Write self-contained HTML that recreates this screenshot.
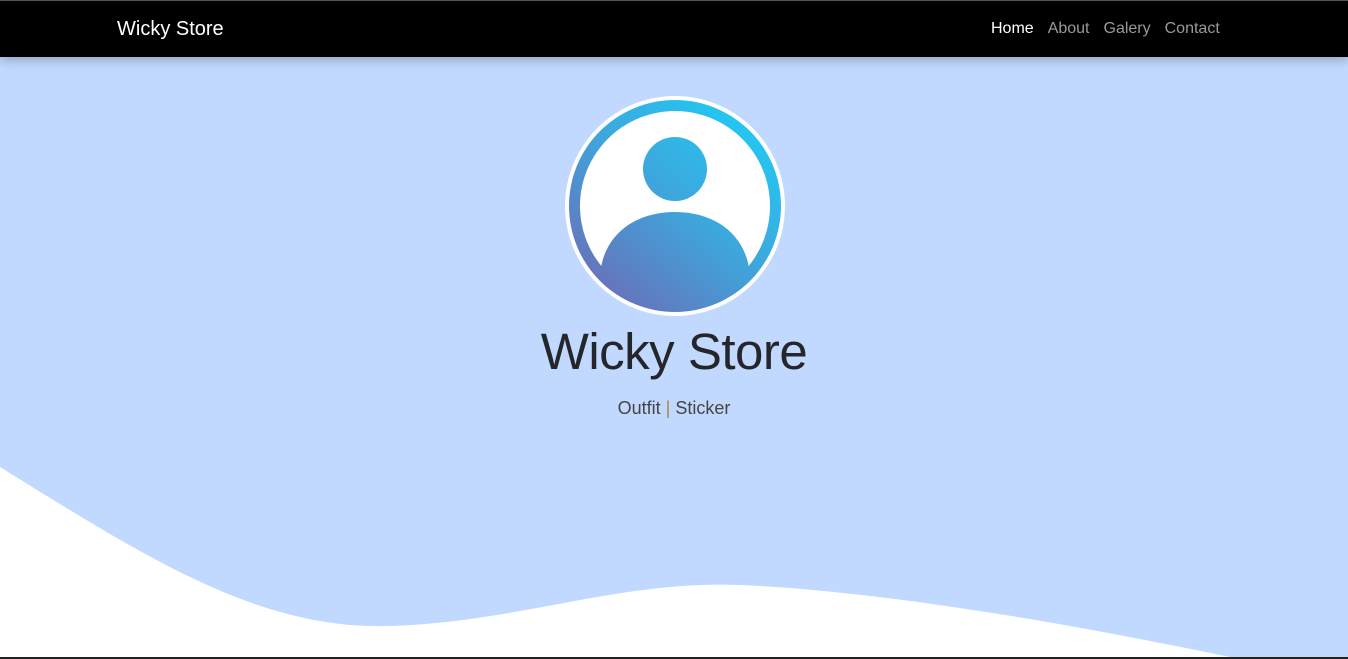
<!DOCTYPE html>
<html><head><style>
html,body{margin:0;padding:0;width:1348px;height:659px;overflow:hidden;background:#c1d9fe;font-family:"Liberation Sans",sans-serif}
.nav{position:absolute;left:0;top:0;width:1348px;height:57px;background:#000;border-top:1px solid #555;box-sizing:border-box;box-shadow:0 3px 10px rgba(0,0,0,.25);z-index:2}
.brand{position:absolute;left:117px;top:17px;color:#fff;font-size:20px}
.links{position:absolute;left:991px;top:19px;font-size:16px;color:#9a9a9a;white-space:nowrap}
.links span{margin-right:14px}
.t{position:absolute;left:0;width:1348px;text-align:center;color:#24262b}
</style></head><body>
<div class="nav"><div class="brand">Wicky Store</div>
<div class="links"><span style="color:#fff">Home</span><span>About</span><span>Galery</span><span>Contact</span></div></div>
<svg style="position:absolute;left:0;top:0" width="1348" height="659">
<defs><linearGradient id="g" gradientUnits="userSpaceOnUse" x1="600" y1="300" x2="760" y2="110"><stop offset="0" stop-color="#6a6fb8"/><stop offset=".5" stop-color="#3ea6dc"/><stop offset="1" stop-color="#1fccf6"/></linearGradient>
<clipPath id="c"><circle cx="675" cy="206" r="96"/></clipPath></defs>
<path d="M0 467 C150 560 260 630 390 626 C520 622 620 580 740 585 C900 592 1100 630 1240 659 L0 659Z" fill="#fff"/>
<rect x="0" y="657" width="1348" height="2" fill="#222"/>
<circle cx="675" cy="206" r="110" fill="#fff"/>
<circle cx="675" cy="206" r="106" fill="url(#g)"/>
<circle cx="675" cy="206" r="95" fill="#fff"/>
<g clip-path="url(#c)" fill="url(#g)">
<circle cx="675" cy="169" r="32"/>
<path d="M600 310 L600 280 C600 240 630 212 675 212 C720 212 750 240 750 280 L750 310Z"/>
</g>
</svg>
<div class="t" style="top:322px;font-size:51px;letter-spacing:-0.5px">Wicky Store</div>
<div class="t" style="top:398px;font-size:18px;color:#444">Outfit <span style="color:#b08040">|</span> Sticker</div>
</body></html>
